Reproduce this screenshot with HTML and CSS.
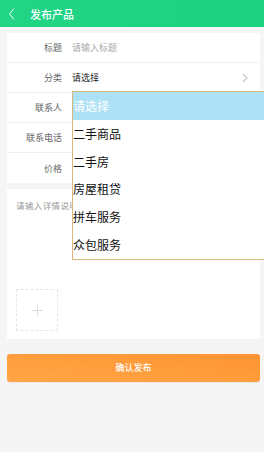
FILE: index.html
```html
<!DOCTYPE html>
<html lang="zh-CN">
<head>
  <meta charset="UTF-8" />
  <meta name="viewport" content="width=device-width, initial-scale=1.0"/>
  <title>发布产品</title>
  <link rel="stylesheet" href="styles.css">
</head>
<body>
  <div class="header">
    <svg class="back" width="8" height="12" viewBox="0 0 8 12">
      <polyline points="6,0.5 1.5,6 6,11.5" fill="none" stroke="#fff" stroke-width="1"/>
    </svg>
    <h1>发布产品</h1>
  </div>

  <div class="form">
    <div class="row">
      <span class="label">标题</span>
      <span class="value placeholder">请输入标题</span>
    </div>
    <div class="row">
      <span class="label">分类</span>
      <span class="value">请选择</span>
      <svg class="arrow" width="6" height="10" viewBox="0 0 6 10">
        <polyline points="1,1 5,5 1,9" fill="none" stroke="#c8c8c8" stroke-width="1.2"/>
      </svg>
    </div>
    <div class="row">
      <span class="label">联系人</span>
    </div>
    <div class="row">
      <span class="label">联系电话</span>
    </div>
    <div class="row last">
      <span class="label">价格</span>
    </div>

    <ul class="dropdown">
      <li class="active">请选择</li>
      <li>二手商品</li>
      <li>二手房</li>
      <li>房屋租贷</li>
      <li>拼车服务</li>
      <li>众包服务</li>
    </ul>
  </div>

  <div class="detail">
    <div class="detail-text">请输入详情说明</div>
    <div class="upload">
      <span class="plus-h"></span>
      <span class="plus-v"></span>
    </div>
  </div>

  <div class="btn">确认发布</div>
</body>
</html>
```

FILE: styles.css
```css
* {
  margin: 0;
  padding: 0;
  box-sizing: border-box;
  font-family: "Noto Sans CJK SC", "Noto Sans", sans-serif;
}

body {
  background-color: #f5f5f5;
  overflow: hidden;
  height: 452px;
}

.header {
  height: 27px;
  background: linear-gradient(to right, #21d486, #1dd283);
  display: flex;
  align-items: center;
  padding-left: 8px;
}

.header .back {
  margin-right: 14px;
}

.header h1 {
  color: #fff;
  font-size: 11px;
  font-weight: 500;
}

.form {
  position: relative;
  background-color: #fff;
  margin: 6px 4px 0 7px;
}

.row {
  height: 30px;
  border-bottom: 1px solid #f0f0f0;
  display: flex;
  align-items: center;
  font-size: 9px;
}

.row.last {
  border-bottom: none;
}

.label {
  width: 55px;
  text-align: right;
  color: #666;
}

.value {
  margin-left: 10px;
  color: #222;
  flex: 1;
}

.value.placeholder {
  color: #aaa;
}

.arrow {
  margin-right: 12px;
}

.dropdown {
  position: absolute;
  top: 58px;
  left: 65px;
  width: 200px;
  list-style: none;
  background-color: #fff;
  border: 1px solid #d9b77d;
}

.dropdown li {
  height: 27.8px;
  line-height: 27.8px;
  font-size: 12px;
  color: #111;
}

.dropdown li.active {
  background-color: #ade1f6;
  color: #fff;
}

.detail {
  background-color: #fff;
  margin: 6px 4px 0 7px;
  padding: 10px 9px 8px;
}

.detail-text {
  font-size: 8.5px;
  letter-spacing: 0.4px;
  color: #999;
  height: 90px;
}

.upload {
  position: relative;
  width: 42px;
  height: 42px;
  border: 1px dashed #e6e6e6;
}

.plus-h,
.plus-v {
  position: absolute;
  background-color: #ddd;
}

.plus-h {
  left: 15px;
  top: 20px;
  width: 11px;
  height: 1px;
}

.plus-v {
  left: 20px;
  top: 15px;
  width: 1px;
  height: 11px;
}

.btn {
  margin: 15px 4px 0 7px;
  height: 28px;
  border-radius: 3px;
  background: linear-gradient(to top right, #ffa646, #ff9431);
  box-shadow: 0 1px 1px rgba(0, 0, 0, 0.05);
  color: #fff;
  font-size: 9px;
  font-weight: 500;
  text-align: center;
  line-height: 28px;
}
```
